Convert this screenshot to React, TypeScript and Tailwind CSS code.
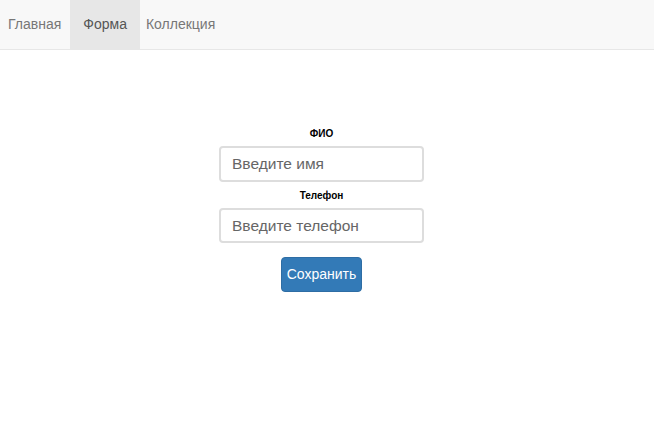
export default function App() {
  return (
    <div className="min-h-screen bg-white" style={{ fontFamily: '"Liberation Sans", Arial, sans-serif' }}>
      <nav className="h-[50px] bg-[#f8f8f8] border-b border-[#e7e7e7] flex">
        <a className="pl-[8px] pr-[9px] leading-[49px] text-[14px] text-[#777]">Главная</a>
        <a className="px-[13px] leading-[49px] text-[14px] text-[#555] bg-[#e7e7e7]">Форма</a>
        <a className="px-[6px] leading-[49px] text-[14px] text-[#777]">Коллекция</a>
      </nav>
      <form className="flex flex-col items-center pt-[77px] pr-[11px]">
        <label className="text-[10px] font-bold text-black leading-[14px] mb-[5px]">ФИО</label>
        <input
          placeholder="Введите имя"
          className="w-[205px] h-[36px] pl-[11px] pr-[12px] text-[15.5px] border-2 border-[#ddd] rounded-[4px] placeholder:text-[#666] outline-none"
        />
        <label className="text-[10px] font-bold text-black leading-[14px] mt-[7px] mb-[5px]">Телефон</label>
        <input
          placeholder="Введите телефон"
          className="w-[205px] h-[35px] pl-[11px] pr-[12px] text-[15.5px] border-2 border-[#ddd] rounded-[4px] placeholder:text-[#666] outline-none"
        />
        <button
          type="button"
          className="mt-[14px] w-[81px] h-[35px] bg-[#337ab7] text-white text-[14px] rounded-[4px] border border-[#2e6da4]"
        >
          Сохранить
        </button>
      </form>
    </div>
  );
}
